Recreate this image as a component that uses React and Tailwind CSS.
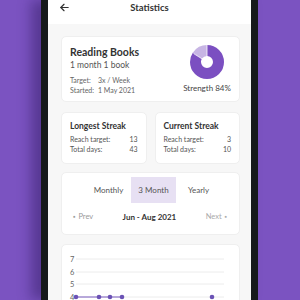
import React from 'react';

function ArrowLeft() {
  return (
    <svg width="11" height="11" viewBox="0 0 24 24" fill="none" stroke="#333" strokeWidth="2.6" strokeLinecap="round" strokeLinejoin="round">
      <path d="M20 12H4" />
      <path d="M11 5l-7 7 7 7" />
    </svg>
  );
}

function Donut() {
  // 84% dark, 16% light, starting at 12 o'clock
  const r = 11.5;
  const c = 2 * Math.PI * r;
  const dark = c * 0.84;
  const light = c * 0.16;
  return (
    <svg width="34" height="34" viewBox="0 0 34 34" className="block">
      <g transform="rotate(-90 17 17)">
        <circle cx="17" cy="17" r={r} fill="none" stroke="#7b4fc1" strokeWidth="11" strokeDasharray={`${dark} ${c}`} />
        <circle cx="17" cy="17" r={r} fill="none" stroke="#c7b5e4" strokeWidth="11" strokeDasharray={`${light} ${c}`} strokeDashoffset={-dark} />
      </g>
      <line x1="17" y1="0" x2="17" y2="12" stroke="#fff" strokeWidth="0.8" />
      <line x1="17" y1="17" x2="3.5" y2="8.5" stroke="#fff" strokeWidth="0.8" />
      <circle cx="17" cy="17" r="5" fill="#fff" />
    </svg>
  );
}

function StreakCard({ title, target, days }) {
  return (
    <div className="flex-1 h-[52px] bg-white rounded-[5px] border border-[#efefef] pl-[8px] pr-[8px] pt-[7px]">
      <div className="text-[8.5px] font-bold text-[#333] leading-[12px]">{title}</div>
      <div className="mt-[2px] flex justify-between text-[7px] text-[#555] leading-[10px]">
        <span>Reach target:</span>
        <span>{target}</span>
      </div>
      <div className="flex justify-between text-[7px] text-[#555] leading-[10px]">
        <span>Total days:</span>
        <span>{days}</span>
      </div>
    </div>
  );
}

function Chart() {
  const ys = [
    { v: 7, y: 14 },
    { v: 6, y: 27 },
    { v: 5, y: 39 },
    { v: 4, y: 52 },
  ];
  return (
    <svg width="178" height="60" viewBox="0 0 178 60" className="block">
      {ys.map((t) => (
        <g key={t.v}>
          <text x="8" y={t.y + 3} fontSize="7.5" fill="#666" fontFamily="Lato, sans-serif">{t.v}</text>
          <line x1="14" y1={t.y} x2="162" y2={t.y} stroke="#ececec" strokeWidth="1" />
        </g>
      ))}
      <polyline points="14,52 37,52 48,52 60,52" fill="none" stroke="#7a5cc0" strokeWidth="1.2" />
      {[14, 37, 48, 60, 150].map((x) => (
        <circle key={x} cx={x} cy="52" r="2.3" fill="#6b52b5" />
      ))}
    </svg>
  );
}

export default function App() {
  return (
    <div className="w-[300px] h-[300px] overflow-hidden bg-[#7b53c1] flex" style={{ fontFamily: 'Lato, "Noto Sans", sans-serif' }}>
      <div className="ml-[41px] w-[217px] h-[300px] shrink-0 border-l-[7px] border-r-[7px] border-[#16191b] bg-[#f7f7f7] shadow-[-10px_0_12px_rgba(45,25,90,0.45)] flex flex-col overflow-hidden">
        <div className="h-[24px] shrink-0 bg-white flex items-start pt-[1px] relative">
          <div className="absolute left-[11px] top-[2px]">
            <ArrowLeft />
          </div>
          <div className="w-full text-center text-[9.5px] font-bold text-[#333] leading-[14px]">Statistics</div>
        </div>

        <div className="flex flex-col shrink-0 pl-[13px] pr-[11px] pt-[12px]">
          <div className="bg-white rounded-[5px] border border-[#efefef] flex justify-between pl-[8px] pr-[8px] pt-[7px] h-[66px]">
            <div className="flex flex-col">
              <div className="text-[10.5px] font-bold text-[#333] leading-[16px]">Reading Books</div>
              <div className="text-[8.5px] text-[#555] leading-[11px]">1 month 1 book</div>
              <div className="mt-[4px] text-[7px] text-[#666] leading-[10px]">
                <div className="flex"><span className="w-[28px]">Target:</span><span>3x / Week</span></div>
                <div className="flex"><span className="w-[28px]">Started:</span><span>1 May 2021</span></div>
              </div>
            </div>
            <div className="flex flex-col items-center w-[48px] pt-[1px]">
              <Donut />
              <div className="mt-[4px] text-[8px] text-[#444] leading-[11px] whitespace-nowrap">Strength 84%</div>
            </div>
          </div>

          <div className="flex gap-[8px] mt-[10px]">
            <StreakCard title="Longest Streak" target="13" days="43" />
            <StreakCard title="Current Streak" target="3" days="10" />
          </div>

          <div className="mt-[8px] bg-white rounded-[5px] border border-[#efefef] h-[63px] pt-[4px]">
            <div className="flex justify-center pl-[6px] text-[8px] text-[#555]">
              <div className="w-[45px] h-[26px] flex items-center justify-center">Monthly</div>
              <div className="w-[45px] h-[26px] flex items-center justify-center bg-[#e7e0f3]">3 Month</div>
              <div className="w-[45px] h-[26px] flex items-center justify-center">Yearly</div>
            </div>
            <div className="flex justify-between items-center pl-[11px] pr-[12px] mt-[8px] text-[7.5px] leading-[12px]">
              <span className="text-[#999]"><span className="text-[4px] mr-[3px] align-middle">●</span>Prev</span>
              <span className="font-bold text-[#333] text-[8px]">Jun - Aug 2021</span>
              <span className="text-[#aaa]">Next<span className="text-[4px] ml-[3px] align-middle">●</span></span>
            </div>
          </div>

          <div className="mt-[9px] bg-white rounded-[5px] border border-[#efefef] h-[80px]">
            <Chart />
          </div>
        </div>
      </div>
    </div>
  );
}
